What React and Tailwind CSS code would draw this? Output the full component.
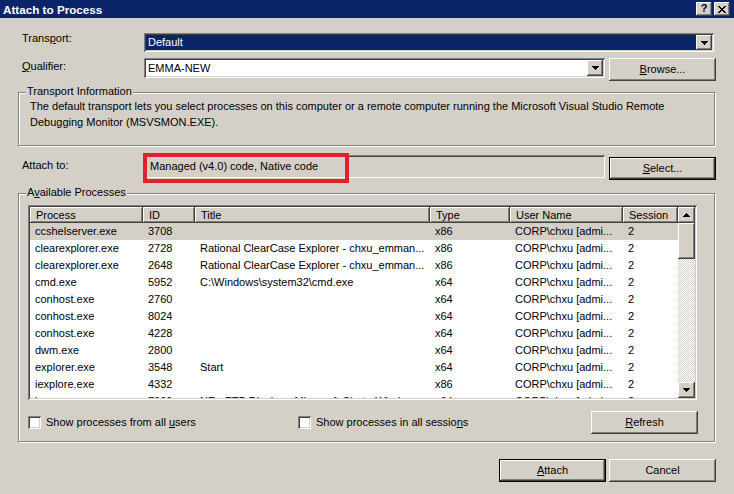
import React from "react";

const raised =
  "shadow-[inset_-1px_-1px_#404040,inset_1px_1px_#ffffff,inset_-2px_-2px_#808080,inset_2px_2px_#d4d0c8]";
const sunken =
  "shadow-[inset_1px_1px_#808080,inset_-1px_-1px_#ffffff,inset_2px_2px_#404040,inset_-2px_-2px_#d4d0c8]";
const etched = "border border-[#808080] shadow-[inset_1px_1px_#ffffff,1px_1px_#ffffff]";

function Arrow({ up = false }) {
  return (
    <svg width="7" height="4" viewBox="0 0 7 4" shapeRendering="crispEdges" fill="#000">
      {up ? (
        <>
          <rect x="3" y="0" width="1" height="1" />
          <rect x="2" y="1" width="3" height="1" />
          <rect x="1" y="2" width="5" height="1" />
          <rect x="0" y="3" width="7" height="1" />
        </>
      ) : (
        <>
          <rect x="0" y="0" width="7" height="1" />
          <rect x="1" y="1" width="5" height="1" />
          <rect x="2" y="2" width="3" height="1" />
          <rect x="3" y="3" width="1" height="1" />
        </>
      )}
    </svg>
  );
}

function CloseGlyph() {
  return (
    <svg width="8" height="7" viewBox="0 0 8 7" shapeRendering="crispEdges" fill="#000">
      <rect x="0" y="0" width="2" height="1" />
      <rect x="6" y="0" width="2" height="1" />
      <rect x="1" y="1" width="2" height="1" />
      <rect x="5" y="1" width="2" height="1" />
      <rect x="2" y="2" width="4" height="1" />
      <rect x="3" y="3" width="2" height="1" />
      <rect x="2" y="4" width="4" height="1" />
      <rect x="1" y="5" width="2" height="1" />
      <rect x="5" y="5" width="2" height="1" />
      <rect x="0" y="6" width="2" height="1" />
      <rect x="6" y="6" width="2" height="1" />
    </svg>
  );
}

function Btn({ children, def = false }) {
  return (
    <div
      className={`w-[107px] h-[23px] shrink-0 flex items-center justify-center bg-[#d4d0c8] ${raised} ${
        def ? "border border-black" : ""
      }`}
    >
      {children}
    </div>
  );
}

const cols = ["w-[113px]", "w-[52px]", "w-[235px]", "w-[80px]", "w-[113px]", "w-[55px]"];
const headers = ["Process", "ID", "Title", "Type", "User Name", "Session"];
const user = "CORP\\chxu [admi...";
const rce = "Rational ClearCase Explorer - chxu_emman...";
const rows = [
  ["ccshelserver.exe", "3708", "", "x86", user, "2"],
  ["clearexplorer.exe", "2728", rce, "x86", user, "2"],
  ["clearexplorer.exe", "2648", rce, "x86", user, "2"],
  ["cmd.exe", "5952", "C:\\Windows\\system32\\cmd.exe", "x64", user, "2"],
  ["conhost.exe", "2760", "", "x64", user, "2"],
  ["conhost.exe", "8024", "", "x64", user, "2"],
  ["conhost.exe", "4228", "", "x64", user, "2"],
  ["dwm.exe", "2800", "", "x64", user, "2"],
  ["explorer.exe", "3548", "Start", "x64", user, "2"],
  ["iexplore.exe", "4332", "", "x86", user, "2"],
  ["lync.exe", "7000", "NE - FTP Display - Microsoft Chat - Windows", "x64", user, "2"],
];

export default function App() {
  return (
    <div className="w-[734px] h-[494px] bg-[#d4d0c8] overflow-hidden flex flex-col text-[11px] text-black font-['Liberation_Sans',Arial,sans-serif]">
      {/* Title bar */}
      <div className="h-[18px] shrink-0 bg-[#0a246a] flex items-center pl-[3px] pr-[4px]">
        <span className="text-white font-bold text-[11.7px] leading-[13px]">Attach to Process</span>
        <div className="ml-auto flex gap-[2px]">
          <div
            className={`w-[16px] h-[14px] bg-[#d4d0c8] ${raised} flex items-center justify-center text-[11px] font-bold leading-none pb-[1px]`}
          >
            ?
          </div>
          <div className={`w-[16px] h-[14px] bg-[#d4d0c8] ${raised} flex items-center justify-center`}>
            <CloseGlyph />
          </div>
        </div>
      </div>

      <div className="pl-[18px] flex flex-col">
        {/* Transport */}
        <div className="mt-[15px] h-[19px] flex items-start">
          <div className="w-[126px] pl-[4px] leading-[13px] -mt-px">
            Trans<span className="underline">p</span>ort:
          </div>
          <div className={`w-[570px] h-[19px] bg-white ${sunken} p-[2px] flex`}>
            <div className="flex-1 bg-[#0a246a] text-white pl-[2px] leading-[15px]">Default</div>
            <div className={`w-[16px] h-[15px] bg-[#d4d0c8] ${raised} flex items-center justify-center`}>
              <Arrow />
            </div>
          </div>
        </div>

        {/* Qualifier */}
        <div className="mt-[6px] h-[23px] flex items-start">
          <div className="w-[126px] pl-[4px] leading-[13px] mt-[2px]">
            <span className="underline">Q</span>ualifier:
          </div>
          <div className={`w-[461px] h-[20px] bg-white ${sunken} p-[2px] flex`}>
            <div className="flex-1 pl-[2px] leading-[16px]">EMMA-NEW</div>
            <div className={`w-[16px] h-[16px] bg-[#d4d0c8] ${raised} flex items-center justify-center`}>
              <Arrow />
            </div>
          </div>
          <div className="ml-[4px]">
            <Btn>
              <span>
                <span className="underline">B</span>rowse...
              </span>
            </Btn>
          </div>
        </div>

        {/* Transport Information */}
        <div className={`relative mt-[11px] w-[697px] h-[54px] ${etched} pl-[11px] pt-[5px] leading-[16px]`}>
          <span className="absolute left-[7px] -top-[8px] px-[1px] bg-[#d4d0c8] leading-[13px]">
            Transport Information
          </span>
          <div className="whitespace-nowrap">
            The default transport lets you select processes on this computer or a remote computer running the
            Microsoft Visual Studio Remote
          </div>
          <div className="whitespace-nowrap">Debugging Monitor (MSVSMON.EXE).</div>
        </div>

        {/* Attach to */}
        <div className="mt-[7px] h-[30px] flex items-start">
          <div className="w-[126px] pl-[4px] leading-[13px] mt-[6px]">Attach to:</div>
          <div className={`relative mt-[2px] w-[461px] h-[23px] ${sunken} flex items-center pl-[6px] leading-[13px]`}>
            Managed (v4.0) code, Native code
            <div className="absolute -left-[1px] -top-[2px] w-[206px] h-[30px] border-[4px] border-[#e0202a]" />
          </div>
          <div className="ml-[4px] mt-[4px]">
            <Btn def>
              <span>
                <span className="underline">S</span>elect...
              </span>
            </Btn>
          </div>
        </div>

        {/* Available Processes */}
        <div className={`relative mt-[10px] w-[697px] h-[249px] ${etched} pl-[9px] pt-[11px]`}>
          <span className="absolute left-[7px] -top-[8px] px-[1px] bg-[#d4d0c8] leading-[13px]">
            A<span className="underline">v</span>ailable Processes
          </span>

          <div className={`w-[669px] h-[195px] bg-white ${sunken} p-[2px] flex`}>
            <div className="w-[648px] flex flex-col overflow-hidden">
              <div className="flex h-[16px] shrink-0">
                {headers.map((h, i) => (
                  <div
                    key={h}
                    className={`${cols[i]} shrink-0 ${raised} bg-[#d4d0c8] pl-[6px] leading-[16px] whitespace-nowrap`}
                  >
                    {h}
                  </div>
                ))}
              </div>
              {rows.map((r, ri) => (
                <div
                  key={ri}
                  className={`flex h-[17px] shrink-0 items-center ${ri === 0 ? "bg-[#d4d0c8]" : ""}`}
                >
                  {r.map((c, i) => (
                    <div
                      key={i}
                      className={`${cols[i]} shrink-0 pl-[5px] leading-[17px] whitespace-nowrap overflow-hidden`}
                    >
                      {c}
                    </div>
                  ))}
                </div>
              ))}
            </div>
            <div className="w-[17px] flex flex-col">
              <div className={`h-[16px] shrink-0 bg-[#d4d0c8] ${raised} flex items-center justify-center`}>
                <Arrow up />
              </div>
              <div className={`h-[36px] shrink-0 bg-[#d4d0c8] ${raised}`} />
              <div className="flex-1 bg-[repeating-conic-gradient(#d4d0c8_0_25%,#ffffff_0_50%)] bg-[length:2px_2px]" />
              <div className={`h-[16px] shrink-0 bg-[#d4d0c8] ${raised} flex items-center justify-center`}>
                <Arrow />
              </div>
            </div>
          </div>

          <div className="mt-[11px] w-[670px] h-[23px] flex items-center">
            <div className="w-[270px] flex items-center">
              <div className={`w-[13px] h-[13px] bg-white ${sunken}`} />
              <span className="ml-[5px] leading-[13px]">
                Show processes from all <span className="underline">u</span>sers
              </span>
            </div>
            <div className={`w-[13px] h-[13px] bg-white ${sunken}`} />
            <span className="ml-[5px] leading-[13px]">
              Show processes in all sessio<span className="underline">n</span>s
            </span>
            <div className="ml-auto">
              <Btn>
                <span>
                  <span className="underline">R</span>efresh
                </span>
              </Btn>
            </div>
          </div>
        </div>

        {/* Bottom buttons */}
        <div className="mt-[17px] w-[698px] flex justify-end gap-[3px]">
          <Btn def>
            <span>
              <span className="underline">A</span>ttach
            </span>
          </Btn>
          <Btn>Cancel</Btn>
        </div>
      </div>
    </div>
  );
}
